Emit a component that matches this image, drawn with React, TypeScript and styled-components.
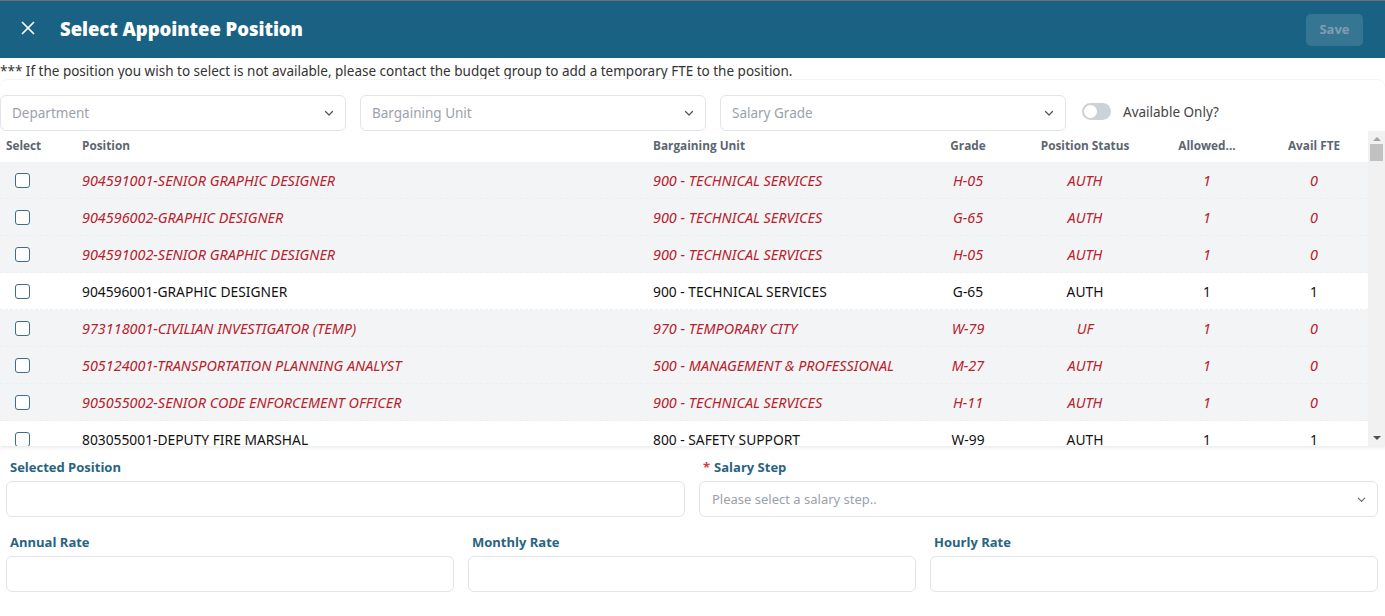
import React from "react";
import styled, { createGlobalStyle, css } from "styled-components";

const Global = createGlobalStyle`
  html, body { margin: 0; padding: 0; background: #fff; }
  body { font-family: "Noto Sans", "Open Sans", sans-serif; color: #222; }
  * { box-sizing: border-box; }
`;

const Page = styled.div`
  width: 1385px;
  height: 616px;
  overflow: hidden;
  border-top: 1px solid #6f6f6f;
  display: flex;
  flex-direction: column;
`;

const Header = styled.header`
  height: 57px;
  background: #1a6283;
  display: flex;
  align-items: center;
  padding: 0 22px 3px 19px;
`;

const CloseBtn = styled.button`
  width: 18px;
  height: 18px;
  border: 0;
  background: transparent;
  padding: 0;
  display: flex;
  align-items: center;
  justify-content: center;
  margin-right: 23px;
  cursor: pointer;
`;

const Title = styled.h1`
  flex: 1;
  margin: 0;
  color: #fff;
  font-family: "Open Sans", "Noto Sans", sans-serif;
  font-weight: 800;
  font-size: 18.5px;
  letter-spacing: -0.05px;
`;

const SaveBtn = styled.button`
  width: 57px;
  height: 32px;
  border: 0;
  border-radius: 5px;
  background: rgba(255, 255, 255, 0.13);
  color: #7f9db0;
  font-family: "Open Sans", sans-serif;
  font-weight: 700;
  font-size: 13px;
  padding: 0 0 2px;
  margin-bottom: -3px;
`;

const Notice = styled.p`
  margin: 0;
  padding: 4px 0 0 0;
  height: 21px;
  font-size: 13.5px;
  color: #333;
  line-height: 18px;
  white-space: nowrap;
`;

const FilterCard = styled.div`
  border-top: 1px solid #f2f3f5;
  border-radius: 8px 8px 0 0;
  padding-top: 15px;
  display: flex;
  align-items: center;
`;

const SelectBox = styled.div<{ $w?: number }>`
  width: ${(p) => p.$w ?? 346}px;
  height: 36px;
  border: 1px solid #e1e4e8;
  border-radius: 6px;
  display: flex;
  align-items: center;
  justify-content: space-between;
  padding: 0 10px 0 11px;
  margin-right: 14px;
  background: #fff;
`;

const Placeholder = styled.span`
  font-size: 13.5px;
  color: #9aa2ab;
`;

const ToggleWrap = styled.label`
  display: flex;
  align-items: center;
  margin-left: 2px;
  margin-top: -3px;
  gap: 12px;
  font-size: 13.5px;
  color: #444;
`;

const Track = styled.span`
  width: 29px;
  height: 17px;
  border-radius: 9px;
  background: #cdd2d7;
  position: relative;
  &::after {
    content: "";
    position: absolute;
    left: 2px;
    top: 2px;
    width: 13px;
    height: 13px;
    border-radius: 50%;
    background: #fff;
  }
`;

const TableArea = styled.div`
  display: flex;
  height: 315px;
  box-shadow: 0 2px 3px rgba(0, 0, 0, 0.08);
  position: relative;
  z-index: 1;
`;

const Table = styled.div`
  flex: 1;
  overflow: hidden;
`;

const cols = "76px 571px 273px 96px 138px 106px 108px";

const HeadRow = styled.div`
  display: grid;
  grid-template-columns: ${cols};
  height: 31px;
  align-items: center;
  padding-bottom: 3px;
  background: #fff;
`;

const HeadCell = styled.div<{ $align?: string }>`
  font-family: "Open Sans", sans-serif;
  font-weight: 700;
  font-size: 11.8px;
  color: #5c6670;
  padding: 0 6px;
  text-align: ${(p) => p.$align ?? "left"};
  white-space: nowrap;
`;

const Row = styled.div<{ $off: boolean }>`
  display: grid;
  grid-template-columns: ${cols};
  height: 37px;
  align-items: center;
  background: ${(p) => (p.$off ? "#f3f4f6" : "#fff")};
  border-bottom: 1px dashed #eceef0;
  ${(p) =>
    p.$off
      ? css`
          color: #b8212b;
          font-style: italic;
          font-size: 14.4px;
        `
      : css`
          color: #111;
          font-size: 13.8px;
        `}
`;

const Cell = styled.div<{ $align?: string }>`
  padding: 0 6px;
  text-align: ${(p) => p.$align ?? "left"};
  white-space: nowrap;
  overflow: hidden;
`;

const Check = styled.span`
  display: block;
  width: 15px;
  height: 15px;
  margin-left: 9px;
  border: 1.5px solid #3f6d88;
  border-radius: 3px;
  background: #fff;
`;

const ScrollBar = styled.div`
  width: 17px;
  background: #f1f1f1;
  display: flex;
  flex-direction: column;
  align-items: center;
`;

const Arrow = styled.div<{ $down?: boolean }>`
  width: 0;
  height: 0;
  border-left: 4px solid transparent;
  border-right: 4px solid transparent;
  ${(p) =>
    p.$down
      ? css`border-top: 4px solid #505050; margin-top: auto; margin-bottom: 6px;`
      : css`border-bottom: 4px solid #a3a3a3; margin-top: 6px;`}
`;

const Thumb = styled.div`
  width: 13px;
  height: 17px;
  background: #c1c1c1;
  margin-top: 3px;
`;

const Form = styled.div`
  padding: 11px 7px 0 6px;
  display: flex;
  flex-direction: column;
  gap: 15px;
`;

const FormRow = styled.div<{ $n: number }>`
  display: grid;
  grid-template-columns: repeat(${(p) => p.$n}, 1fr);
  column-gap: 14px;
`;

const Field = styled.div`
  display: flex;
  flex-direction: column;
`;

const Label = styled.label`
  font-family: "Open Sans", sans-serif;
  font-weight: 700;
  font-size: 13px;
  color: #286482;
  padding-left: 4px;
  height: 20px;
  line-height: 20px;
  margin-bottom: 4px;
`;

const Req = styled.span`
  color: #d23a3a;
  margin-right: 4px;
`;

const Input = styled.div`
  height: 36px;
  border: 1px solid #e1e4e8;
  border-radius: 6px;
  background: #fff;
  display: flex;
  align-items: center;
  justify-content: space-between;
  padding: 0 10px 0 12px;
`;

const SmallPh = styled.span`
  font-size: 13px;
  color: #9aa2ab;
`;

const Chevron = ({ size = 12, color = "#555" }: { size?: number; color?: string }) => (
  <svg width={size} height={size} viewBox="0 0 12 12" fill="none">
    <path d="M2.5 4.5 L6 8 L9.5 4.5" stroke={color} strokeWidth="1.2" strokeLinecap="round" strokeLinejoin="round" />
  </svg>
);

type R = { pos: string; bu: string; grade: string; status: string; allowed: string; avail: string; off: boolean };

const rows: R[] = [
  { pos: "904591001-SENIOR GRAPHIC DESIGNER", bu: "900 - TECHNICAL SERVICES", grade: "H-05", status: "AUTH", allowed: "1", avail: "0", off: true },
  { pos: "904596002-GRAPHIC DESIGNER", bu: "900 - TECHNICAL SERVICES", grade: "G-65", status: "AUTH", allowed: "1", avail: "0", off: true },
  { pos: "904591002-SENIOR GRAPHIC DESIGNER", bu: "900 - TECHNICAL SERVICES", grade: "H-05", status: "AUTH", allowed: "1", avail: "0", off: true },
  { pos: "904596001-GRAPHIC DESIGNER", bu: "900 - TECHNICAL SERVICES", grade: "G-65", status: "AUTH", allowed: "1", avail: "1", off: false },
  { pos: "973118001-CIVILIAN INVESTIGATOR (TEMP)", bu: "970 - TEMPORARY CITY", grade: "W-79", status: "UF", allowed: "1", avail: "0", off: true },
  { pos: "505124001-TRANSPORTATION PLANNING ANALYST", bu: "500 - MANAGEMENT & PROFESSIONAL", grade: "M-27", status: "AUTH", allowed: "1", avail: "0", off: true },
  { pos: "905055002-SENIOR CODE ENFORCEMENT OFFICER", bu: "900 - TECHNICAL SERVICES", grade: "H-11", status: "AUTH", allowed: "1", avail: "0", off: true },
  { pos: "803055001-DEPUTY FIRE MARSHAL", bu: "800 - SAFETY SUPPORT", grade: "W-99", status: "AUTH", allowed: "1", avail: "1", off: false },
  { pos: "803055002-DEPUTY FIRE MARSHAL", bu: "800 - SAFETY SUPPORT", grade: "W-99", status: "AUTH", allowed: "1", avail: "1", off: false },
];

export default function App() {
  return (
    <>
      <Global />
      <Page>
        <Header>
          <CloseBtn aria-label="Close">
            <svg width="14" height="14" viewBox="0 0 14 14">
              <path d="M1.5 1.5 L12.5 12.5 M12.5 1.5 L1.5 12.5" stroke="#fff" strokeWidth="1.7" strokeLinecap="round" />
            </svg>
          </CloseBtn>
          <Title>Select Appointee Position</Title>
          <SaveBtn disabled>Save</SaveBtn>
        </Header>
        <Notice>
          *** If the position you wish to select is not available, please contact the budget group to add a temporary FTE to the position.
        </Notice>
        <FilterCard>
          <SelectBox>
            <Placeholder>Department</Placeholder>
            <Chevron />
          </SelectBox>
          <SelectBox>
            <Placeholder>Bargaining Unit</Placeholder>
            <Chevron />
          </SelectBox>
          <SelectBox>
            <Placeholder>Salary Grade</Placeholder>
            <Chevron />
          </SelectBox>
          <ToggleWrap>
            <Track />
            Available Only?
          </ToggleWrap>
        </FilterCard>
        <TableArea>
          <Table>
            <HeadRow>
              <HeadCell>Select</HeadCell>
              <HeadCell>Position</HeadCell>
              <HeadCell>Bargaining Unit</HeadCell>
              <HeadCell $align="center">Grade</HeadCell>
              <HeadCell $align="center">Position Status</HeadCell>
              <HeadCell $align="center">Allowed...</HeadCell>
              <HeadCell $align="center">Avail FTE</HeadCell>
            </HeadRow>
            {rows.map((r, i) => (
              <Row key={i} $off={r.off}>
                <Cell>
                  <Check />
                </Cell>
                <Cell>{r.pos}</Cell>
                <Cell>{r.bu}</Cell>
                <Cell $align="center">{r.grade}</Cell>
                <Cell $align="center">{r.status}</Cell>
                <Cell $align="center">{r.allowed}</Cell>
                <Cell $align="center">{r.avail}</Cell>
              </Row>
            ))}
          </Table>
          <ScrollBar>
            <Arrow />
            <Thumb />
            <Arrow $down />
          </ScrollBar>
        </TableArea>
        <Form>
          <FormRow $n={2}>
            <Field>
              <Label>Selected Position</Label>
              <Input />
            </Field>
            <Field>
              <Label>
                <Req>*</Req>Salary Step
              </Label>
              <Input>
                <SmallPh>Please select a salary step..</SmallPh>
                <Chevron size={11} color="#666" />
              </Input>
            </Field>
          </FormRow>
          <FormRow $n={3}>
            <Field>
              <Label>Annual Rate</Label>
              <Input />
            </Field>
            <Field>
              <Label>Monthly Rate</Label>
              <Input />
            </Field>
            <Field>
              <Label>Hourly Rate</Label>
              <Input />
            </Field>
          </FormRow>
        </Form>
      </Page>
    </>
  );
}
